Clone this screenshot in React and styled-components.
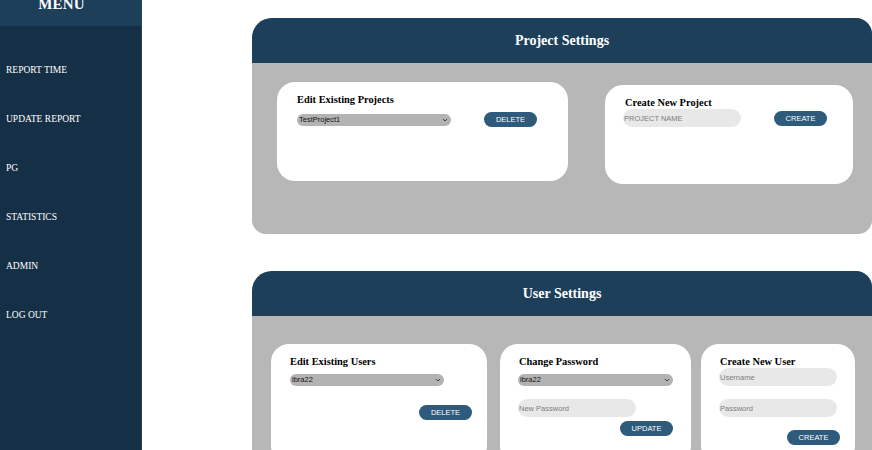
import React from "react";
import styled, { createGlobalStyle } from "styled-components";

const Global = createGlobalStyle`
  html, body { margin: 0; padding: 0; background: #ffffff; overflow: hidden; }
  body { font-family: "Liberation Serif", "Times New Roman", serif; }
  * { box-sizing: border-box; }
`;

const Page = styled.div`
  display: flex;
  width: 872px;
  height: 450px;
  overflow: hidden;
`;

const Sidebar = styled.aside`
  width: 142px;
  flex: none;
  height: 100%;
  background: #152f46;
  border-right: 1px solid #2a4460;
  display: flex;
  flex-direction: column;
`;

const MenuHeader = styled.div`
  height: 26px;
  background: #1e3f5a;
  padding-right: 18px;
  text-align: center;
  overflow: hidden;
`;

const MenuTitle = styled.h1`
  margin: -4px 0 0;
  font-size: 15px;
  line-height: 16px;
  font-weight: bold;
  color: #ffffff;
  letter-spacing: 0.2px;
`;

const Nav = styled.nav`
  display: flex;
  flex-direction: column;
  gap: 37px;
  padding: 38px 0 0 6px;
`;

const NavItem = styled.a`
  color: #ffffff;
  font-size: 9.5px;
  line-height: 12px;
  text-decoration: none;
`;

const Main = styled.main`
  flex: 1;
  padding: 18px 0 0 110px;
  display: flex;
  flex-direction: column;
  gap: 37px;
`;

const Panel = styled.section`
  width: 620px;
  flex: none;
  background: #b8b7b8;
  border-radius: 20px 16px 14px 14px;
  overflow: hidden;
  height: ${(p) => p.$h}px;
`;

const PanelHeader = styled.header`
  height: 45px;
  background: #1d3f5a;
  display: flex;
  align-items: center;
  justify-content: center;
`;

const PanelTitle = styled.h2`
  margin: 0;
  color: #ffffff;
  font-size: 14px;
  font-weight: bold;
`;

const PanelBody = styled.div`
  display: flex;
  align-items: flex-start;
  padding: ${(p) => p.$pad};
`;

const Card = styled.div`
  width: ${(p) => p.$w}px;
  height: ${(p) => p.$h}px;
  margin: ${(p) => p.$mt || 0}px 0 0 ${(p) => p.$ml || 0}px;
  background: #ffffff;
  border-radius: 18px;
  padding: ${(p) => p.$pad};
  display: flex;
  flex-direction: column;
  flex: none;
`;

const CardTitle = styled.h3`
  margin: 0 0 0 ${(p) => p.$ml || 0}px;
  font-size: 10.4px;
  line-height: 12px;
  font-weight: bold;
  color: #000000;
`;

const Row = styled.div`
  display: flex;
  align-items: center;
  margin-top: ${(p) => p.$mt || 0}px;
`;

const SelectWrap = styled.div`
  position: relative;
  width: ${(p) => p.$w}px;
  height: 12px;
  margin-top: ${(p) => p.$mt || 0}px;
  flex: none;
`;

const Select = styled.select`
  display: block;
  appearance: none;
  -webkit-appearance: none;
  width: 100%;
  height: 12px;
  border: none;
  border-radius: 6px;
  background: #b4b3b4;
  font-family: "Liberation Sans", Arial, sans-serif;
  font-size: 7.5px;
  line-height: 12px;
  color: #111;
  padding: 0 0 0 2px;
  margin: 0;
  outline: none;
`;

const Chevron = styled.svg`
  position: absolute;
  right: 3px;
  top: 3px;
  width: 6px;
  height: 6px;
  pointer-events: none;
`;

const Input = styled.input`
  display: block;
  width: 118px;
  height: 18px;
  border: none;
  border-radius: 9px;
  background: #e8e8e8;
  font-family: "Liberation Sans", Arial, sans-serif;
  font-size: 7.5px;
  padding: 0 0 0 1px;
  margin: ${(p) => p.$mt || 0}px 0 0 ${(p) => p.$ml || 0}px;
  outline: none;
  flex: none;
  &::placeholder { color: #7d7d7d; }
`;

const Button = styled.button`
  display: block;
  width: 53px;
  height: 15px;
  border: none;
  border-radius: 8px;
  background: #2e5a7b;
  color: #ffffff;
  font-family: "Liberation Sans", Arial, sans-serif;
  font-size: 7.5px;
  padding: 0;
  flex: none;
  margin: ${(p) => p.$mt || 0}px 0 0 ${(p) => p.$ml || 0}px;
  align-self: ${(p) => p.$self || "auto"};
`;

const Dropdown = ({ w, mt, value }) => (
  <SelectWrap $w={w} $mt={mt}>
    <Select defaultValue={value}>
      <option>{value}</option>
    </Select>
    <Chevron viewBox="0 0 6 6">
      <path d="M0.9 2 L3 4 L5.1 2" fill="none" stroke="#333" strokeWidth="0.9" />
    </Chevron>
  </SelectWrap>
);

const navItems = ["REPORT TIME", "UPDATE REPORT", "PG", "STATISTICS", "ADMIN", "LOG OUT"];

export default function App() {
  return (
    <>
      <Global />
      <Page>
        <Sidebar>
          <MenuHeader>
            <MenuTitle>MENU</MenuTitle>
          </MenuHeader>
          <Nav>
            {navItems.map((n) => (
              <NavItem key={n} href="#">{n}</NavItem>
            ))}
          </Nav>
        </Sidebar>
        <Main>
          <Panel $h={216}>
            <PanelHeader>
              <PanelTitle>Project Settings</PanelTitle>
            </PanelHeader>
            <PanelBody $pad="19px 19px 0 25px">
              <Card $w={291} $h={99} $pad="12px 0 0 20px">
                <CardTitle>Edit Existing Projects</CardTitle>
                <Row $mt={6}>
                  <Dropdown w={154} value="TestProject1" />
                  <Button $ml={33}>DELETE</Button>
                </Row>
              </Card>
              <Card $w={248} $h={99} $mt={3} $ml={37} $pad="12px 0 0 18px">
                <CardTitle $ml={2}>Create New Project</CardTitle>
                <Row>
                  <Input placeholder="PROJECT NAME" />
                  <Button $ml={33}>CREATE</Button>
                </Row>
              </Card>
            </PanelBody>
          </Panel>
          <Panel $h={220}>
            <PanelHeader>
              <PanelTitle>User Settings</PanelTitle>
            </PanelHeader>
            <PanelBody $pad="28px 17px 0 19px">
              <Card $w={216} $h={120} $pad="12px 15px 0 19px">
                <CardTitle>Edit Existing Users</CardTitle>
                <Dropdown w={154} mt={6} value="ibra22" />
                <Button $mt={19} $self="flex-end">DELETE</Button>
              </Card>
              <Card $w={191} $h={120} $ml={13} $pad="12px 18px 0 18px">
                <CardTitle $ml={1}>Change Password</CardTitle>
                <Dropdown w={155} mt={6} value="ibra22" />
                <Input placeholder="New Password" $mt={13} />
                <Button $mt={4} $self="flex-end">UPDATE</Button>
              </Card>
              <Card $w={154} $h={120} $ml={10} $pad="12px 15px 0 18px">
                <CardTitle $ml={1}>Create New User</CardTitle>
                <Input placeholder="Username" />
                <Input placeholder="Password" $mt={13} />
                <Button $mt={13} $self="flex-end">CREATE</Button>
              </Card>
            </PanelBody>
          </Panel>
        </Main>
      </Page>
    </>
  );
}
